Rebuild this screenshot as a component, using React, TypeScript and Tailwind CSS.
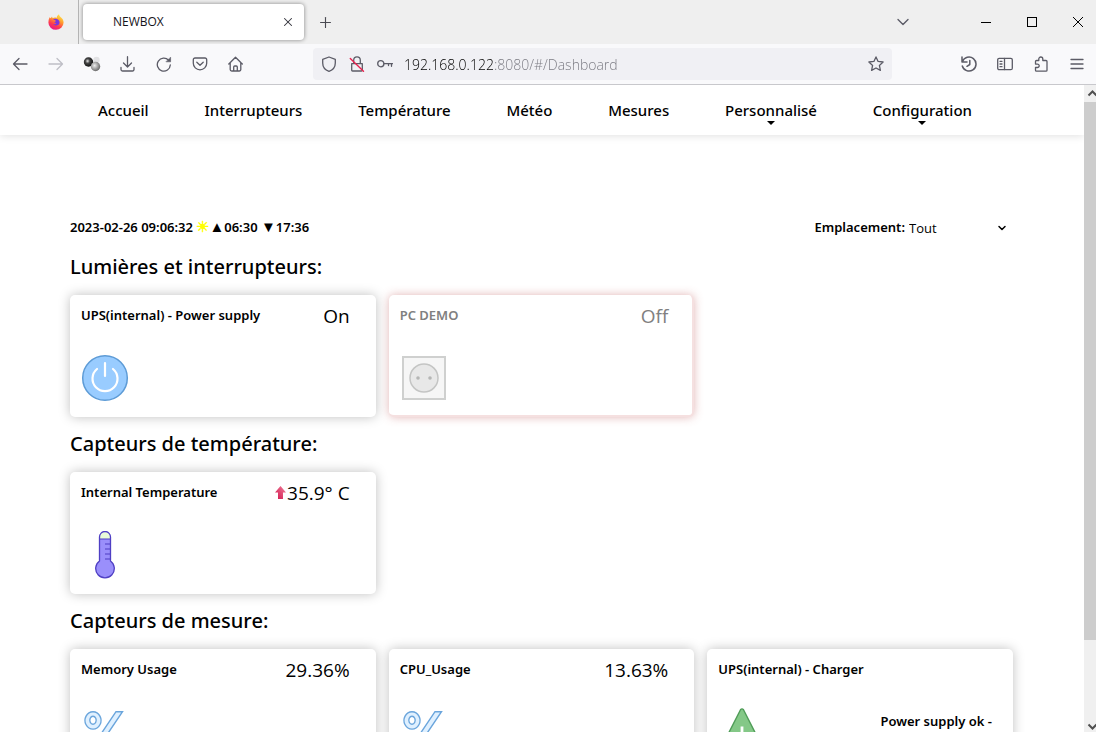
import type { ReactNode } from "react";
import { ChevronDown, Plus, X } from "lucide-react";

const navItems = [
  { label: "Accueil", menu: false },
  { label: "Interrupteurs", menu: false },
  { label: "Température", menu: false },
  { label: "Météo", menu: false },
  { label: "Mesures", menu: false },
  { label: "Personnalisé", menu: true },
  { label: "Configuration", menu: true },
];

function ToolbarButton({ label, faded, children }: { label: string; faded?: boolean; children: ReactNode }) {
  return (
    <button
      type="button"
      aria-label={label}
      className={`flex h-8 w-9 shrink-0 items-center justify-center ${faded ? "text-[#bfbfc6]" : "text-[#5b5b66]"}`}
    >
      <svg width="16" height="16" viewBox="0 0 16 16" fill="none" stroke="currentColor" strokeWidth="1.3" strokeLinecap="round" strokeLinejoin="round">
        {children}
      </svg>
    </button>
  );
}

function FirefoxLogo() {
  return (
    <svg width="16" height="16" viewBox="0 0 16 16">
      <defs>
        <linearGradient id="fox" x1="0.8" y1="0" x2="0.3" y2="1">
          <stop offset="0" stopColor="#fff14a" />
          <stop offset="0.4" stopColor="#ff9a2e" />
          <stop offset="0.7" stopColor="#ff3b4e" />
          <stop offset="1" stopColor="#e3168f" />
        </linearGradient>
      </defs>
      <path d="M1.6 3.2 2.8 4.3 4 2.6 4.6 4.2C6 3.4 7.6 3.5 8.6 4 8.8 2.2 9.7 1 11 .2c.1 1.6 1.2 2.4 2.4 3.6 1.3 1.2 2.2 2.8 2.2 4.8A7.6 7.4 0 0 1 8 15.8 7.6 7.4 0 0 1 .4 8.4c0-2 .4-3.7 1.2-5.2z" fill="url(#fox)" />
      <path d="M5 5.6c1.4-1 3.8-1 5.3.2 1.7 1.4 1.7 3.8.2 5-1.6 1.3-4.2.9-5.2-.7 1.4.4 2.5-.1 3-.9-1.2 0-2-.5-1.8-1.2.5-.3 1.4-.3 1.6-.9-.9-.7-1.8-1.3-3.1-1.5z" fill="#7a35e0" />
    </svg>
  );
}

function TabBar() {
  return (
    <div className="flex h-11 shrink-0 items-center bg-[#efefef]">
      <button type="button" aria-label="Firefox" className="flex h-11 w-[79px] shrink-0 items-center justify-end border-r border-[#b4b4b4] pr-[14px]">
        <FirefoxLogo />
      </button>
      <div className="ml-1 flex h-9 w-[221px] shrink-0 items-center rounded bg-white pr-2 pl-[30px] shadow-[0_0_4px_rgba(0,0,0,0.45)]">
        <span className="flex-1 text-xs text-[#15141a]">NEWBOX</span>
        <button type="button" aria-label="Fermer l'onglet" className="flex size-4 items-center justify-center">
          <X size={14} strokeWidth={1.8} className="text-[#33333b]" />
        </button>
      </div>
      <button type="button" aria-label="Nouvel onglet" className="ml-[13px] text-[#4a4a52]">
        <Plus size={17} strokeWidth={1.6} />
      </button>
      <div className="flex-1" />
      <button type="button" aria-label="Lister les onglets" className="mr-[50px] text-[#5b5b66]">
        <ChevronDown size={20} strokeWidth={1.6} />
      </button>
      <div className="flex text-black">
        <button type="button" aria-label="Réduire" className="flex h-11 w-[46px] items-center justify-center">
          <span className="h-px w-[10px] bg-black" />
        </button>
        <button type="button" aria-label="Agrandir" className="flex h-11 w-[46px] items-center justify-center">
          <span className="size-[10px] border border-black" />
        </button>
        <button type="button" aria-label="Fermer" className="flex h-11 w-[41px] items-center justify-center pl-1">
          <svg width="10" height="10" viewBox="0 0 10 10" stroke="currentColor">
            <path d="M0 0l10 10M10 0L0 10" />
          </svg>
        </button>
      </div>
    </div>
  );
}

function UrlIcon({ label, children }: { label: string; children: ReactNode }) {
  return (
    <button type="button" aria-label={label} className="flex h-8 w-7 shrink-0 items-center justify-center text-[#5b5b66]">
      <svg width="16" height="16" viewBox="0 0 16 16" fill="none" stroke="currentColor" strokeWidth="1.3" strokeLinecap="round" strokeLinejoin="round">
        {children}
      </svg>
    </button>
  );
}

function Toolbar() {
  return (
    <div className="flex h-[41px] shrink-0 items-center border-b border-[#c8c8cc] bg-[#f9f9fb] pr-px pl-0.5">
      <ToolbarButton label="Reculer">
        <path d="M15 8H1.5M7 2.5L1.5 8l5.5 5.5" />
      </ToolbarButton>
      <ToolbarButton label="Avancer" faded>
        <path d="M1 8h13.5M9 2.5L14.5 8 9 13.5" />
      </ToolbarButton>
      <button type="button" aria-label="Extension" className="flex h-8 w-9 shrink-0 items-center justify-center">
        <svg width="18" height="16" viewBox="0 0 18 16">
          <defs>
            <radialGradient id="ballDark" cx="0.4" cy="0.4" r="0.6">
              <stop offset="0" stopColor="#e8e8e8" />
              <stop offset="0.4" stopColor="#444" />
              <stop offset="1" stopColor="#111" />
            </radialGradient>
            <radialGradient id="ballGray" cx="0.4" cy="0.4" r="0.7">
              <stop offset="0" stopColor="#eee" />
              <stop offset="1" stopColor="#555" />
            </radialGradient>
          </defs>
          <circle cx="13.5" cy="4" r="3.2" fill="#e2e2e4" />
          <circle cx="5.5" cy="6" r="4.7" fill="url(#ballDark)" />
          <circle cx="12.5" cy="10.5" r="4.7" fill="url(#ballGray)" />
        </svg>
      </button>
      <ToolbarButton label="Téléchargements">
        <path d="M7.5 .7v10M3.5 7l4 4 4-4M1 11.5v2a1.5 1.5 0 0 0 1.5 1.5h10a1.5 1.5 0 0 0 1.5-1.5v-2" />
      </ToolbarButton>
      <ToolbarButton label="Actualiser">
        <path d="M14.3 9A6.5 6.5 0 1 1 12.6 4.2" />
        <path d="M14.6 1.5v4.3h-4.3z" fill="currentColor" strokeWidth="0.6" />
      </ToolbarButton>
      <ToolbarButton label="Pocket">
        <path d="M3 2h10a1.7 1.7 0 0 1 1.7 1.7V7.3a6.7 6.5 0 0 1-13.4 0V3.7A1.7 1.7 0 0 1 3 2zM4.8 6.3L8 9.3l3.2-3" />
      </ToolbarButton>
      <ToolbarButton label="Accueil">
        <path d="M.8 8L7.5 1.2 14.3 8M2.2 6.5v7a1.5 1.5 0 0 0 1.5 1.5h7.6a1.5 1.5 0 0 0 1.5-1.5v-7M5.7 15v-4a1 1 0 0 1 1-1h1.6a1 1 0 0 1 1 1v4" />
      </ToolbarButton>

      <div className="mx-[59px] flex h-8 min-w-0 flex-1 items-center rounded bg-[#f0f0f4] pl-0.5">
        <UrlIcon label="Protection">
          <path d="M8 1L14.3 3.3V7c0 4-2.6 7-6.3 8.3C4.3 14 1.7 11 1.7 7V3.3z" />
        </UrlIcon>
        <UrlIcon label="Connexion non sécurisée">
          <path d="M2.7 7.7h10.6v6.5a.8.8 0 0 1-.8.8h-9a.8.8 0 0 1-.8-.8zM4.7 7.5V4.2a3.3 3.3 0 0 1 6.6 0v3.3" />
          <path d="M1.3 2.5L14.5 15.3" stroke="#e8224f" strokeWidth="1.4" />
        </UrlIcon>
        <UrlIcon label="Identifiants">
          <circle cx="3.8" cy="7.7" r="3.1" />
          <path d="M7 7.7h8.5M14.5 7.7v2.6M11.5 7.7v1.8" />
        </UrlIcon>
        <input
          type="text"
          aria-label="Adresse"
          defaultValue="192.168.0.122:8080/#/Dashboard"
          spellCheck={false}
          className="min-w-0 flex-1 bg-[linear-gradient(to_right,#000000_94px,#77777f_94px)] bg-clip-text pt-0.5 pl-[5px] text-sm font-light text-transparent outline-none"
        />
        <button type="button" aria-label="Marque-page" className="flex h-8 w-8 shrink-0 items-center justify-center text-[#5b5b66]">
          <svg width="16" height="16" viewBox="0 0 16 16" fill="none" stroke="currentColor" strokeWidth="1.3" strokeLinejoin="round">
            <path d="M8 .9l2.1 4.5 5 .6-3.7 3.4 1 5L8 12l-4.4 2.4 1-5L.9 6l5-.6z" />
          </svg>
        </button>
      </div>

      <ToolbarButton label="Historique">
        <path d="M1.5 5.5A7 7 0 1 1 1.3 10M1 1v5h5M8.8 4.5v4L6 10.3" strokeWidth="1.5" />
      </ToolbarButton>
      <ToolbarButton label="Panneau latéral">
        <rect x="0.7" y="2.3" width="14.6" height="11.4" rx="1.5" />
        <path d="M7.5 2.5v11M3 5.3h2M3 8h2M3 10.7h2" />
      </ToolbarButton>
      <ToolbarButton label="Extensions">
        <path d="M5.8 4.5V3a2 2 0 0 1 4 0v1.5H13a1 1 0 0 1 1 1v8.7a1 1 0 0 1-1 1H3.500a1 1 0 0 1-1-1v-2.700h2a1.700 1.700 0 0 0 0-3.400h-2V5.500a1 1 0 0 1 1-1z" />
      </ToolbarButton>
      <ToolbarButton label="Menu">
        <path d="M2 3.5h12M2 8h12M2 12.5h12" />
      </ToolbarButton>
    </div>
  );
}

function PowerIcon() {
  return (
    <svg width="48" height="48" viewBox="0 0 48 48" className="shrink-0">
      <circle cx="24" cy="24" r="22.3" fill="#99ccff" stroke="#5d9bd6" strokeWidth="1.5" />
      <path d="M16 15a12.5 12.5 0 1 0 16 0M24 9v13" fill="none" stroke="#fff" strokeWidth="2.2" strokeLinecap="round" />
    </svg>
  );
}

function SocketIcon() {
  return (
    <svg width="48" height="48" viewBox="0 0 48 48" className="shrink-0">
      <rect x="3" y="3" width="42" height="42" fill="#f6f6f6" stroke="#cfd0cf" strokeWidth="2" />
      <circle cx="24" cy="24" r="14" fill="#e8e8e8" stroke="#c4c5c4" strokeWidth="1.5" />
      <circle cx="18" cy="24" r="1.8" fill="#b5b6b5" />
      <circle cx="30" cy="24" r="1.8" fill="#b5b6b5" />
    </svg>
  );
}

function ThermometerIcon() {
  return (
    <svg width="48" height="48" viewBox="0 0 48 48" className="shrink-0">
      <path d="M18.5 30V6a5.5 5.5 0 0 1 11 0v24a9.3 9.3 0 1 1-11 0z" fill="#9a8ffb" />
      <path d="M18.5 8V6a5.5 5.5 0 0 1 11 0v2z" fill="#e9fbd9" />
      <path d="M18.5 8h11M24 13h5.5M24 18h5.5M24 23h5.5M24 28h5.5" stroke="#4f3fc4" strokeWidth="1.2" />
      <path d="M18.5 30V6a5.5 5.5 0 0 1 11 0v24a9.3 9.3 0 1 1-11 0z" fill="none" stroke="#4f3fc4" strokeWidth="1.3" />
    </svg>
  );
}

function PercentIcon() {
  return (
    <svg width="48" height="48" viewBox="0 0 48 48" className="shrink-0" fill="#dff0ff" stroke="#6aa5dc" strokeWidth="1.4">
      <path fillRule="evenodd" d="M12 3.7a8 8.7 0 1 0 .01 0zM12 8.3a3.2 4 0 1 1-.01 0z" />
      <path d="M35 3.7h6.5L14 44.5H7.500z" />
      <path fillRule="evenodd" d="M36 27a8 8.7 0 1 0 .01 0zM36 31.6a3.2 4 0 1 1-.01 0z" />
    </svg>
  );
}

function AlertIcon() {
  return (
    <svg width="48" height="48" viewBox="0 0 48 48" className="shrink-0">
      <path d="M22.5 1.8q1.5-1.8 3 0L46.5 43q.7 2.5-1.5 2.5H3Q.8 45.5 1.5 43z" fill="#84c887" stroke="#4f9c57" strokeWidth="1.4" strokeLinejoin="round" />
      <path d="M24 18.5v14M24 37v3" stroke="#fff" strokeWidth="2.8" />
    </svg>
  );
}

function TrendUp() {
  return (
    <svg width="12" height="14" viewBox="0 0 12 14">
      <defs>
        <linearGradient id="trend" x1="1" y1="0" x2="0" y2="1">
          <stop offset="0" stopColor="#f0829c" />
          <stop offset="1" stopColor="#d11149" />
        </linearGradient>
      </defs>
      <path d="M5.500 0L11 6.500H8V13H3V6.500H0z" fill="url(#trend)" />
    </svg>
  );
}

type CardProps = { title: string; value?: string; trend?: boolean; off?: boolean; status?: string; icon: ReactNode };

function Card({ title, value, trend, off, status, icon }: CardProps) {
  return (
    <article
      className={`rounded-[5px] bg-white pt-[7px] pl-[11px] ${
        off
          ? "border-r-2 border-b-2 border-[#f5e0e0] pb-[13px] text-[#808080] shadow-[0_0_10px_rgba(190,90,90,0.45)]"
          : "pb-[15px] text-black shadow-[0_0_12px_rgba(0,0,0,0.25)]"
      }`}
    >
      <div className={`flex h-7 items-center justify-between ${off ? "pr-6" : "pr-[26px]"}`}>
        <h3 className="font-['Noto_Sans',sans-serif] text-[13px] font-semibold">{title}</h3>
        {value && (
          <span className="flex items-center text-[19px] leading-7">
            {trend && <TrendUp />}
            {value}
          </span>
        )}
      </div>
      <div className="mt-6 flex justify-between pr-[21px]">
        {icon}
        {status && <p className="pt-1 font-['Noto_Sans',sans-serif] text-[13px] leading-[18px] font-semibold">{status}</p>}
      </div>
    </article>
  );
}

function Section({ title, children }: { title: string; children: ReactNode }) {
  return (
    <section>
      <h2 className="pt-3 pb-3.5 font-['Noto_Sans',sans-serif] text-xl leading-[29px] font-medium">{title}</h2>
      <div className="grid grid-cols-3 gap-[13px]">{children}</div>
    </section>
  );
}

export default function App() {
  return (
    <div className="flex h-screen flex-col overflow-hidden bg-white font-['Open_Sans','Noto_Sans',sans-serif] text-black">
      <TabBar />
      <Toolbar />
      <div className="flex min-h-0 flex-1">
        <div className="min-w-0 flex-1 overflow-hidden">
          <nav className="h-[50px] pr-28 pl-[98px] shadow-[0_1px_8px_rgba(0,0,0,0.12)]">
            <ul className="flex h-full justify-between">
              {navItems.map((item) => (
                <li key={item.label} className="relative flex items-center">
                  <a href={`#${item.label}`} className="font-['Noto_Sans',sans-serif] text-[15px] font-medium">
                    {item.label}
                  </a>
                  {item.menu && (
                    <span className="absolute inset-x-0 bottom-[10px] mx-auto size-0 border-x-4 border-t-4 border-x-transparent border-t-black" />
                  )}
                </li>
              ))}
            </ul>
          </nav>

          <main className="pt-20 pr-[71px] pl-[70px]">
            <div className="flex h-[25px] items-center justify-between font-['Noto_Sans',sans-serif] text-[13px] font-semibold">
              <p>
                2023-02-26 09:06:32 <span className="text-[15px] leading-none text-[#ffff00]">☀</span>
                <span className="text-[15px] leading-none">▲</span>06:30 <span className="text-[15px] leading-none">▼</span>17:36
              </p>
              <div className="flex items-center">
                <label htmlFor="room">Emplacement:</label>
                <span className="relative flex items-center">
                  <select id="room" className="w-[108px] appearance-none bg-transparent pt-0.5 pl-1 font-['Open_Sans',sans-serif] text-[13px] font-normal">
                    <option>Tout</option>
                  </select>
                  <ChevronDown size={12} strokeWidth={3} className="pointer-events-none absolute right-[5px]" />
                </span>
              </div>
            </div>

            <Section title="Lumières et interrupteurs:">
              <Card title="UPS(internal) - Power supply" value="On" icon={<PowerIcon />} />
              <Card title="PC DEMO" value="Off" off icon={<SocketIcon />} />
            </Section>
            <Section title="Capteurs de température:">
              <Card title="Internal Temperature" value="35.9° C" trend icon={<ThermometerIcon />} />
            </Section>
            <Section title="Capteurs de mesure:">
              <Card title="Memory Usage" value="29.36%" icon={<PercentIcon />} />
              <Card title="CPU_Usage" value="13.63%" icon={<PercentIcon />} />
              <Card title="UPS(internal) - Charger" status="Power supply ok -" icon={<AlertIcon />} />
            </Section>
          </main>
        </div>

        {/* Scrollbar */}
        <div className="flex w-3 shrink-0 flex-col overflow-hidden bg-[#f0f0f0] text-[#505050]">
          <svg width="17" height="17" viewBox="0 0 17 17" fill="none" stroke="currentColor" strokeWidth="2" className="shrink-0">
            <path d="M4.5 10.5l4-4 4 4" />
          </svg>
          <div className="h-[538px] min-h-0 bg-[#cdcdcd]" />
          <svg width="17" height="17" viewBox="0 0 17 17" fill="none" stroke="currentColor" strokeWidth="2" className="mt-auto shrink-0">
            <path d="M4.5 9.5l4 4 4-4" />
          </svg>
        </div>
      </div>
    </div>
  );
}
